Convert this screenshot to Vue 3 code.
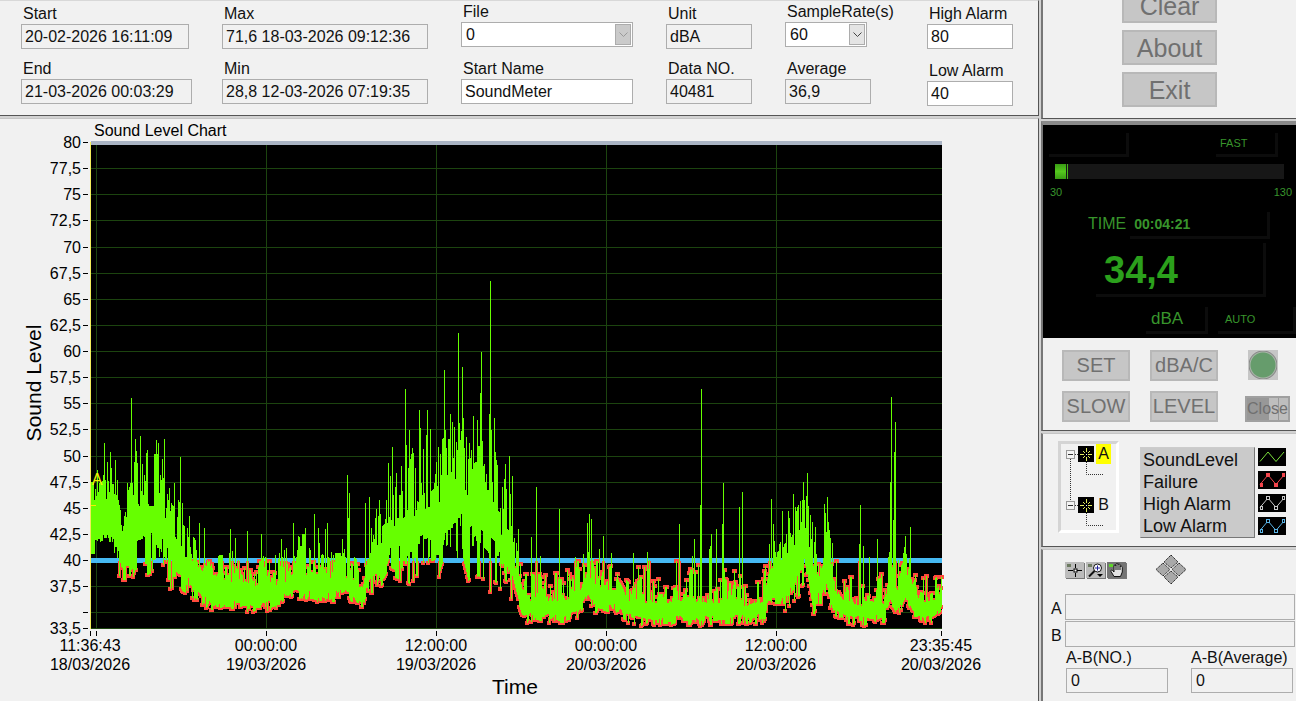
<template>
  <div class="meter-app">
    <main class="left">
      <form class="panel info" @submit.prevent>
        <div v-for="(col, c) in infoColumns" :key="c" class="info-col" :class="col.kind">
          <div v-for="field in col.fields" :key="field.id" class="field">
            <label :for="field.id">{{ field.label }}</label>
            <div v-if="field.type === 'select'" class="select-wrap" :class="{ off: field.off }">
              <select :id="field.id" :disabled="field.off">
                <option>{{ field.value }}</option>
              </select>
              <span class="arrow">
                <svg width="9" height="6" viewBox="0 0 9 6"><path d="M0.5 0.5 4.5 4.5 8.5 0.5" /></svg>
              </span>
            </div>
            <input
              v-else
              :id="field.id"
              type="text"
              :value="field.value"
              :readonly="!field.edit"
              :class="[{ edit: field.edit }, { narrow: field.id === 'start' }]"
            />
          </div>
        </div>
      </form>

      <section class="panel chart">
        <svg class="chart-svg" viewBox="0 0 1038 581" role="img" aria-label="Sound Level Chart">
          <text x="94" y="17" class="t16">Sound Level Chart</text>
          <text transform="translate(41 264) rotate(-90)" text-anchor="middle" class="t21">Sound Level</text>
          <text x="515" y="575" text-anchor="middle" class="t21">Time</text>

          <g v-for="tick in yTicks" :key="tick.value">
            <text v-if="tick.label" x="81" :y="tick.y + 6" text-anchor="end" class="t16">{{ tick.label }}</text>
            <rect x="83" :y="tick.y" width="5" height="1" />
          </g>
          <g v-for="tick in xTicks" :key="tick.x">
            <rect :x="tick.x" y="512" width="1" height="5" />
            <text v-if="tick.time" :x="tick.x" y="532" text-anchor="middle" class="t16">{{ tick.time }}</text>
            <text v-if="tick.time" :x="tick.x" y="551" text-anchor="middle" class="t16">{{ tick.date }}</text>
          </g>

          <rect :x="plot.left" :y="plot.top" :width="plot.width" :height="plot.height" fill="#000" />
          <g fill="#1c440f">
            <rect v-for="tick in yTicks" :key="tick.value" :x="plot.left" :y="tick.y" :width="plot.width" height="1" />
            <rect v-for="x in gridX" :key="x" :x="x" :y="plot.top" width="1" :height="plot.height" />
          </g>
          <rect :x="plot.left" :y="plot.top - 1" :width="plot.width" height="4" fill="#aab4c4" />
          <rect :x="plot.left" :y="toY(40) - 2" :width="plot.width" height="5" fill="#46b9f2" />
          <path :d="failurePath" fill="#ff4a3c" />
          <path :d="levelPath" fill="#66ff00" />
          <rect :x="plot.left - 1" :y="plot.top" width="1" :height="plot.height" fill="#f3ee5a" />
          <text x="97" y="366" text-anchor="middle" class="t16 cursor-name">A</text>
          <path d="M91 386.500h5" stroke="#f4f000" />
        </svg>
      </section>
    </main>

    <aside class="right">
      <section class="panel actions">
        <button type="button" disabled>Clear</button>
        <button type="button" disabled>About</button>
        <button type="button" disabled>Exit</button>
      </section>

      <section class="panel device">
        <div class="lcd">
          <div class="lcd-row lcd-top">
            <span class="cell blank"></span>
            <span class="cell mode">FAST</span>
          </div>
          <div class="bar"><span class="bar-fill"></span><span class="bar-mark"></span></div>
          <div class="scale"><span>30</span><span>130</span></div>
          <div class="lcd-row lcd-time">
            <span>TIME</span>
            <span class="cell clock">00:04:21</span>
          </div>
          <div class="cell reading">34,4</div>
          <div class="lcd-row lcd-units">
            <span class="cell unit">dBA</span>
            <span class="cell auto">AUTO</span>
          </div>
        </div>
        <div class="keys">
          <button type="button" class="key" disabled>SET</button>
          <button type="button" class="key" disabled>dBA/C</button>
          <button type="button" class="led" aria-label="Power" disabled></button>
          <button type="button" class="key" disabled>SLOW</button>
          <button type="button" class="key" disabled>LEVEL</button>
          <button type="button" class="close" disabled>Close</button>
        </div>
      </section>

      <section class="panel series">
        <ul class="tree">
          <li v-for="name in ['A', 'B']" :key="name">
            <svg width="40" height="34" viewBox="0 0 40 34">
              <g fill="none" stroke="#333" stroke-dasharray="1 1">
                <path v-if="name === 'A'" d="M4.500 15V57" />
                <path d="M9 10.500h3M20.500 18v12.500h17" />
              </g>
              <rect x="0.500" y="6.500" width="8" height="8" fill="#f4f4f4" stroke="#999" />
              <path d="M2 10.500h5" stroke="#333" />
              <rect x="12" y="2" width="16" height="16" fill="#000" />
              <path
                d="M14 10.500h4M22 10.500h4M20.500 4v4M20.500 13v4M17 7l2 2M22 9l2-2M17 14l2-2M22 12l2 2"
                stroke="#e4ee60"
              />
              <rect x="20" y="10" width="1" height="1" fill="#fff" />
            </svg>
            <span :class="{ active: name === 'A' }">{{ name }}</span>
          </li>
        </ul>
        <ul class="names">
          <li v-for="item in legend" :key="item.name">{{ item.name }}</li>
        </ul>
        <div class="swatches">
          <svg v-for="item in legend" :key="item.name" width="28" height="18" viewBox="0 0 28 18">
            <rect width="28" height="18" fill="#000" />
            <path d="M2 13.500 10 4 18 13.500 26 4" fill="none" :stroke="item.color" />
            <g v-if="item.mark" :fill="item.mark === 'solid' ? item.color : '#000'" :stroke="item.color">
              <rect x="2.500" y="12.500" width="2" height="3" />
              <rect x="8.500" y="2.500" width="3" height="3" />
              <rect x="16.500" y="12.500" width="3" height="3" />
              <rect x="24.500" y="2.500" width="2" height="3" />
            </g>
          </svg>
        </div>
      </section>

      <section class="panel cursors">
        <div class="tools">
          <button type="button" aria-label="Cursor">
            <svg width="19" height="16" viewBox="0 0 19 16">
              <rect x="2" y="2" width="4" height="3" fill="#6c7a60" />
              <path d="M3 8.500h5M12 8.500h5M10.500 2v4M10.500 11v4" stroke="#000" />
              <rect x="9" y="7" width="3" height="3" fill="#fff" stroke="#000" />
            </svg>
          </button>
          <button type="button" aria-label="Zoom">
            <svg width="19" height="16" viewBox="0 0 19 16">
              <rect x="2" y="2" width="4" height="3" fill="#6c7a60" />
              <circle cx="11.500" cy="6" r="4" fill="#fff" stroke="#111" />
              <path d="M9 6h5M11.500 3.500v5" stroke="#22229a" />
              <path d="M8.500 9 3 14.500" stroke="#111" stroke-width="2" />
              <path d="M11 12h6l-3 3z" fill="#000" />
            </svg>
          </button>
          <button type="button" class="pressed" aria-label="Pan">
            <svg width="19" height="16" viewBox="0 0 19 16">
              <rect x="2" y="2" width="4" height="3" fill="#5fd42c" />
              <path
                d="M7 14.500 4 9.500c-.5-1.500 1-2 2-.5l1 1V4c0-1.500 2-1.500 2 0V2.500c0-1.500 2-1.500 2 0V3c0-1.500 2-1.500 2 .2V5c.5-1.500 2.300-1 2.300.5V10l-1.800 4.500z"
                fill="#e4e4e4"
                stroke="#111"
              />
              <path d="M9 4v4M11 3v5M13 5v3" stroke="#111" />
            </svg>
          </button>
          <svg class="mover" width="32" height="31" viewBox="0 0 32 31">
            <g fill="#a9a9a9" stroke="#222" stroke-dasharray="1.500 0.700">
              <path d="M16 1 23 8 16 14 9 8z" />
              <path d="M8 9 15 15.500 8 22 1 15.500z" />
              <path d="M24 9 31 15.500 24 22 17 15.500z" />
              <path d="M16 17 23 23 16 30 9 23z" />
            </g>
          </svg>
        </div>
        <div class="line">
          <label for="cursor-a">A</label>
          <input id="cursor-a" type="text" readonly />
        </div>
        <div class="line">
          <label for="cursor-b">B</label>
          <input id="cursor-b" type="text" readonly />
        </div>
        <div class="diffs">
          <div class="diff">
            <label for="diff-no">A-B(NO.)</label>
            <input id="diff-no" type="text" value="0" readonly />
          </div>
          <div class="diff">
            <label for="diff-avg">A-B(Average)</label>
            <input id="diff-avg" type="text" value="0" readonly />
          </div>
        </div>
      </section>
    </aside>
  </div>
</template>

<script setup>
const infoColumns = [
  {
    fields: [
      { id: 'start', label: 'Start', value: '20-02-2026 16:11:09' },
      { id: 'end', label: 'End', value: '21-03-2026 00:03:29' },
    ],
  },
  {
    fields: [
      { id: 'max', label: 'Max', value: '71,6 18-03-2026 09:12:36' },
      { id: 'min', label: 'Min', value: '28,8 12-03-2026 07:19:35' },
    ],
  },
  {
    kind: 'raised',
    fields: [
      { id: 'file', label: 'File', value: '0', type: 'select', off: true },
      { id: 'start-name', label: 'Start Name', value: 'SoundMeter', edit: true },
    ],
  },
  {
    fields: [
      { id: 'unit', label: 'Unit', value: 'dBA' },
      { id: 'data-no', label: 'Data NO.', value: '40481' },
    ],
  },
  {
    kind: 'raised',
    fields: [
      { id: 'rate', label: 'SampleRate(s)', value: '60', type: 'select' },
      { id: 'average', label: 'Average', value: '36,9' },
    ],
  },
  {
    kind: 'alarm',
    fields: [
      { id: 'high', label: 'High Alarm', value: '80', edit: true },
      { id: 'low', label: 'Low Alarm', value: '40', edit: true },
    ],
  },
]

const legend = [
  { name: 'SoundLevel', color: '#7be03c' },
  { name: 'Failure', color: '#f2454c', mark: 'solid' },
  { name: 'High Alarm', color: '#c8c8c8', mark: 'open' },
  { name: 'Low Alarm', color: '#5ab4e6', mark: 'open' },
]

const plot = { left: 91, top: 23, width: 851, height: 487 }
const toY = (db) => Math.round(plot.top + (80 - db) * 10.45)

const yTicks = []
for (let v = 80; v >= 35; v -= 2.5) {
  yTicks.push({ value: v, y: toY(v), label: v === 35 ? '' : String(v).replace('.', ',') })
}
yTicks.push({ value: 33.5, y: toY(33.5), label: '33,5' })

const xTicks = [
  { x: 90, time: '11:36:43', date: '18/03/2026' },
  { x: 96 },
  { x: 266, time: '00:00:00', date: '19/03/2026' },
  { x: 436, time: '12:00:00', date: '19/03/2026' },
  { x: 606, time: '00:00:00', date: '20/03/2026' },
  { x: 776, time: '12:00:00', date: '20/03/2026' },
  { x: 941, time: '23:35:45', date: '20/03/2026' },
]
const gridX = [96, 266, 436, 606, 776]

// x, lowest level, spread of lows, base of highs, spread of highs, skew of highs
const envelope = [
  [91, 39, 4, 45.5, 4, 1],
  [98, 39, 4, 45.5, 4, 1],
  [102, 40.6, 2, 45.5, 4.5, 1],
  [116, 40.6, 2, 45.5, 4.5, 1],
  [118, 38, 4, 44, 5, 1],
  [122, 37.8, 4, 42, 5, 1],
  [130, 37.8, 4, 44.5, 6, 1.2],
  [146, 38.4, 4, 45, 5.5, 1],
  [160, 39, 4, 45, 5.5, 1],
  [170, 36.6, 4, 42, 5, 1],
  [180, 36.8, 3, 40.5, 5, 1.3],
  [192, 36.3, 1.5, 39.5, 3.5, 1.3],
  [208, 35.2, 1, 38, 2.4, 1],
  [218, 35, 1.2, 37.6, 3.4, 1],
  [232, 35, 1.2, 37.8, 3.2, 1],
  [255, 35, 1, 37.2, 2.4, 1],
  [264, 35, 1.2, 38.4, 2.4, 1],
  [278, 35, 1.2, 37.2, 3.4, 1],
  [292, 36.4, 1, 38.6, 4, 1.2],
  [310, 36, 1, 38.4, 4, 1.2],
  [330, 35.8, 1, 38, 3, 1],
  [345, 36.4, 1, 38, 3.2, 1],
  [362, 35, 1, 37, 2.6, 1],
  [367, 36.5, 1.5, 40, 3.5, 1.2],
  [384, 37.4, 2, 41, 4, 1],
  [390, 38.2, 3, 43, 5, 1],
  [410, 37.2, 5, 44, 6.5, 1.2],
  [430, 37.6, 5, 45, 6, 1.2],
  [440, 38.2, 4, 45.5, 6, 1],
  [445, 40.2, 4, 47, 5.5, 1],
  [462, 40, 5, 47, 6, 1],
  [468, 37.2, 6, 45.5, 6.5, 1],
  [480, 38.4, 5, 46.5, 6, 1],
  [490, 36.6, 6, 46, 6, 1],
  [500, 36.8, 4.5, 42.5, 5.5, 1],
  [510, 36.2, 3, 41.5, 6, 1],
  [516, 35, 2, 38.5, 4, 1.5],
  [522, 34, 1, 36, 3, 1.3],
  [560, 33.9, 1, 36, 3, 1.8],
  [578, 34.3, 1, 36.6, 3.4, 1.6],
  [588, 36, 1, 38.2, 3.4, 1],
  [595, 34.8, 1, 37.2, 3, 1.3],
  [618, 34.8, 1, 37, 3.2, 1.3],
  [624, 34.1, 1, 36.2, 3.2, 1.6],
  [640, 33.6, 1, 35.8, 4, 2.2],
  [690, 33.7, 1, 36, 4, 2.2],
  [715, 33.6, 1, 35.8, 3, 2.2],
  [735, 33.9, 1, 36.4, 3.6, 1.8],
  [746, 33.6, 1, 35.4, 3, 2.2],
  [763, 33.9, 1, 36, 2.4, 1.8],
  [769, 35, 1.5, 38.5, 3.5, 1],
  [785, 35, 1.5, 39, 4.5, 1],
  [798, 36.2, 3, 42, 4, 1],
  [807, 37, 4, 42.5, 4, 1],
  [812, 34.8, 2, 39, 4, 1],
  [821, 34.8, 2, 38, 3, 1],
  [826, 36.2, 2, 41.5, 4, 1],
  [833, 34.5, 1.5, 37, 3.4, 1.4],
  [842, 34, 1, 36.2, 3.4, 1.6],
  [860, 33.6, 1, 35.6, 3.4, 2.2],
  [884, 33.8, 1, 35.8, 3, 1.8],
  [890, 35.2, 1.5, 38.5, 3, 1],
  [897, 34.2, 1, 36.8, 3, 1],
  [905, 35.8, 1, 39, 3, 1],
  [912, 34.3, 1, 36.4, 2.4, 1.4],
  [925, 33.7, 1, 35.8, 3, 1.8],
  [934, 34, 1, 36.2, 3, 1.5],
  [942, 34.8, 1, 37, 3, 1],
]

// x and level of the tall readings
const peaks = [
  [104, 51.2], [110, 50.3], [131, 55.5], [135, 51.6], [140, 51.9], [147, 50.5], [156, 51.5], [158, 51.2],
  [164, 51.6], [174, 47.4], [180, 49.9], [182, 45.5], [189, 44.2], [199, 43.5], [204, 43.1], [230, 43],
  [235, 42.1], [247, 42.8], [261, 42.5], [281, 42], [293, 43.5], [305, 43.1], [314, 44.4], [318, 43.1],
  [325, 43], [327, 43.5], [342, 42], [347, 48.1], [348, 44], [349, 46.4], [365, 45.5], [369, 46],
  [376, 44.9], [379, 45.7], [388, 49.3], [392, 50.8], [405, 56.4], [406, 51], [409, 52.4], [412, 50.7],
  [419, 54.4], [420, 52.6], [426, 52], [427, 54.4], [430, 52.5], [438, 50.8], [444, 58.2], [450, 54],
  [452, 53.2], [454, 52.7], [458, 61.7], [459, 53.1], [462, 58.5], [463, 53.6], [466, 51.8], [469, 51.2],
  [473, 53.8], [477, 53.4], [480, 56], [481, 59.9], [489, 54], [490, 66.7], [491, 52.4], [494, 53.6],
  [495, 50.3], [505, 49.2], [509, 50], [512, 48], [518, 43], [531, 42.2], [536, 47], [540, 40.4],
  [559, 44.9], [575, 40.3], [583, 40.6], [587, 43.5], [589, 44.4], [591, 43.9], [599, 41.1], [603, 42.3],
  [611, 40.7], [633, 40.7], [647, 40.8], [649, 40], [679, 43.4], [692, 40.4], [694, 42], [700, 45.3],
  [701, 56.4], [709, 41.1], [710, 41.3], [711, 42.5], [716, 43], [722, 43.4], [723, 47.4], [739, 45.1],
  [742, 46.5], [771, 45.8], [773, 43.4], [782, 44.7], [788, 44.7], [789, 44], [793, 46.3], [795, 45.1],
  [797, 45.1], [803, 47.5], [804, 45.7], [807, 48.3], [808, 45.2], [812, 43.6], [815, 43.2], [824, 45.4],
  [825, 44.5], [827, 46], [832, 41.6], [859, 41.5], [860, 45.3], [863, 41.3], [869, 40.3], [877, 42],
  [890, 47.5], [891, 55.6], [893, 43.8], [894, 50.3], [895, 53.2], [903, 40.7], [905, 42.3], [910, 43.2],
]

let seed = 41
const random = () => {
  seed = (seed * 16807) % 2147483647
  return seed / 2147483647
}

const envelopeAt = (x) => {
  const i = Math.max(1, envelope.findIndex((p) => p[0] >= x))
  const a = envelope[i - 1]
  const b = envelope[i]
  const k = (x - a[0]) / (b[0] - a[0])
  return a.map((v, n) => v + (b[n] - v) * k)
}

const peakAt = new Map(peaks)
const columns = []
let lowNoise = 0.5
let highNoise = 0.5
for (let x = plot.left; x < plot.left + plot.width; x++) {
  const [, low, lowSpread, high, highSpread, skew] = envelopeAt(x)
  // neighbouring columns often share one reading
  if (random() < 0.6) lowNoise = random()
  if (random() < 0.75) highNoise = random()
  columns.push({
    x,
    bottom: toY(low + lowSpread * lowNoise),
    top: toY(peakAt.get(x) || high + highSpread * highNoise ** skew),
    outlined: random() < 0.3,
  })
}

const box = (x, y, w, h) => `M${x} ${y}h${w}v${h}h${-w}z`
const levelPath = columns.map((c) => box(c.x, c.top, 1, Math.max(2, c.bottom - c.top))).join('')

// readings under the low alarm get square markers, and some of them an outline
const limit = toY(40)
const failurePath = columns
  .filter((c) => c.bottom > limit)
  .map((c) => {
    const top = Math.max(c.top, limit + 1)
    const line = c.outlined ? box(c.x - 1, top, 3, c.bottom - top) : ''
    const marker = c.top > limit ? box(c.x - 2, c.top - 2, 5, 4) : ''
    return line + marker + box(c.x - 2, c.bottom - 2, 4, 4)
  })
  .join('')
</script>

<style>
body {
  margin: 0;
  background: #f1f1f1;
}
</style>

<style scoped>
.meter-app {
  display: flex;
  gap: 2px;
  min-height: 100vh;
  background: #d2d2d2;
  color: #111;
  font-family: 'Liberation Sans', Arial, sans-serif;
  font-size: 16px;
  line-height: 20px;
}

.left,
.right {
  display: flex;
  flex-direction: column;
  gap: 2px;
}

.left {
  flex: 1;
  min-width: 0;
}

.right {
  flex: 0 0 255px;
}

.panel {
  box-sizing: border-box;
  background: #f1f1f1;
}

.left .panel {
  border-right: 1px solid #555;
}

.right .panel {
  border-left: 2px solid #777;
}

ul {
  margin: 0;
  padding: 0;
  list-style: none;
}

input,
select {
  box-sizing: border-box;
  display: block;
  width: 100%;
  height: 25px;
  margin: 0;
  padding: 0 3px;
  border: 1px solid #adadad;
  border-radius: 0;
  outline: none;
  background: #f1f1f1;
  color: #111;
  font: inherit;
}

input.edit,
select {
  background: #fff;
}

button {
  box-sizing: border-box;
  margin: 0;
  padding: 0;
  border: 2px solid #b8b8b8;
  background: #c6c6c6;
  color: #707070;
  font: inherit;
}

.info {
  display: grid;
  grid-template-columns: 168px 206px 172px 86px 86px 86px;
  column-gap: 33px;
  height: 116px;
  padding-left: 21px;
  border-bottom: 1px solid #555;
  border-top: 1px solid #d8d8d8;
}

.info-col {
  display: flex;
  flex-direction: column;
  gap: 10px;
  padding-top: 3px;
}

.info-col:first-child {
  margin-right: -3px;
}

.info-col.raised {
  gap: 12px;
  padding-top: 1px;
}

.info-col.alarm {
  gap: 12px;
  margin-left: 23px;
  margin-right: -23px;
}

.field label {
  display: block;
  padding-left: 2px;
  white-space: nowrap;
}

.field .narrow {
  width: 168px;
}

.select-wrap {
  position: relative;
}

.info-col:nth-child(5) .select-wrap {
  width: 82px;
}

select {
  appearance: none;
  opacity: 1;
  padding-left: 4px;
}

.arrow {
  position: absolute;
  top: 2px;
  right: 2px;
  display: grid;
  box-sizing: border-box;
  width: 16px;
  height: 21px;
  place-items: center;
  border: 1px solid #acacac;
  background: #e4e4e4;
  pointer-events: none;
}

.arrow path {
  fill: none;
  stroke: #444;
}

.off .arrow {
  background: #cacaca;
}

.off .arrow path {
  stroke: #999;
}

.chart {
  flex: 1;
  border-top: 1px solid #c4c4c4;
}

.chart-svg {
  display: block;
  width: 100%;
}

.t16 {
  font-size: 16px;
}

.t21 {
  font-size: 21px;
}

.cursor-name {
  fill: #f4f000;
}

.actions {
  display: flex;
  flex-direction: column;
  align-items: center;
  justify-content: flex-end;
  gap: 7px;
  height: 119px;
  padding-bottom: 11px;
  overflow: hidden;
  border-bottom: 1px solid #555;
}

.actions button {
  flex: 0 0 35px;
  width: 95px;
  font-size: 25px;
  line-height: 28px;
}

.device {
  height: 310px;
  border-top: 4px solid #8a8a8a;
  border-bottom: 1px solid #555;
}

.lcd {
  display: flex;
  flex-direction: column;
  box-sizing: border-box;
  height: 213px;
  padding-top: 8px;
  background: #000;
  color: #38952c;
  font-size: 11px;
}

.lcd-row {
  display: flex;
}

.cell {
  box-sizing: border-box;
  border-right: 3px solid #0c0c0c;
  border-bottom: 3px solid #0c0c0c;
}

.lcd-top {
  justify-content: space-between;
  height: 24px;
  padding: 0 18px 0 6px;
}

.blank {
  width: 80px;
}

.mode {
  width: 62px;
  padding-left: 4px;
}

.bar {
  display: flex;
  gap: 1px;
  height: 15px;
  margin: 7px 12px 0;
  background: #171717;
}

.bar-fill {
  width: 11px;
  background: linear-gradient(#3a9c14, #55c81e, #3a9c14);
}

.bar-mark {
  width: 1px;
  background: #46b41a;
}

.scale {
  display: flex;
  justify-content: space-between;
  margin-top: 3px;
  padding: 0 4px 0 7px;
}

.lcd-time {
  gap: 4px;
  margin-top: 10px;
  padding-left: 45px;
  font-size: 16px;
  line-height: 24px;
}

.clock {
  width: 140px;
  padding-left: 4px;
  font-size: 14px;
  font-weight: bold;
}

.reading {
  width: 170px;
  height: 54px;
  margin: 4px 0 0 53px;
  padding-left: 8px;
  color: #2ba01c;
  font-size: 38px;
  font-weight: bold;
  line-height: 54px;
}

.lcd-units {
  gap: 10px;
  margin-top: 10px;
  padding-left: 103px;
  line-height: 24px;
}

.unit {
  width: 62px;
  padding-left: 5px;
  font-size: 17px;
}

.auto {
  flex: 1;
  padding-left: 7px;
}

.keys {
  display: grid;
  grid-template-columns: 68px 68px 46px;
  gap: 10px 20px;
  padding: 12px 0 0 19px;
}

.key {
  height: 31px;
  font-size: 20px;
  line-height: 27px;
}

.led {
  width: 30px;
  height: 30px;
  margin-left: 10px;
  border: 1px solid #c6c6c6;
  background: radial-gradient(circle, #669c6c 12px, #a9b5a9 13px, #888 14px, #c6c6c6 15px);
}

.close {
  align-self: end;
  width: 45px;
  height: 26px;
  margin-left: 7px;
  border-color: #a0a0a0;
  background: linear-gradient(90deg, #989898 22px, #bebebe 22px, #bebebe 31px, #999 31px, #999 32px, #bebebe 32px);
  line-height: 18px;
}

.series {
  display: flex;
  align-items: flex-start;
  height: 114px;
  padding: 7px 0 0 15px;
  border-top: 1px solid #c4c4c4;
  border-bottom: 1px solid #555;
}

.tree {
  box-sizing: border-box;
  width: 61px;
  height: 92px;
  padding-left: 5px;
  border: 3px solid #fff;
  border-top-color: #d4d4d4;
  border-left-color: #d4d4d4;
}

.tree li {
  display: flex;
  height: 51px;
}

.tree li:last-child {
  height: 34px;
}

.tree svg {
  flex: none;
  overflow: visible;
}

.tree span {
  width: 15px;
  height: 20px;
  margin-left: -10px;
  text-align: center;
}

.tree .active {
  background: #ff0;
}

.names {
  width: 111px;
  margin: 6px 0 0 21px;
  padding: 1px 0 0 2px;
  border: 1px solid #ccc;
  border-right-color: #777;
  border-bottom-color: #777;
  background: #cacaca;
  font-size: 18px;
  line-height: 22px;
}

.swatches {
  display: flex;
  flex-direction: column;
  gap: 5px;
  margin: 7px 0 0 3px;
}

.cursors {
  flex: 1;
  padding-left: 8px;
  border-top: 1px solid #c4c4c4;
}

.tools {
  display: flex;
  align-items: center;
  gap: 2px;
  padding: 4px 0 9px 14px;
}

.tools button {
  width: 19px;
  height: 16px;
  border: 0;
  background: #bcbcbc;
  box-shadow: 1px 1px 0 #777;
}

.tools .pressed {
  background: #747474;
}

.tools svg {
  display: block;
}

.mover {
  margin-left: 27px;
}

.line {
  display: flex;
  align-items: center;
  margin-bottom: 1px;
}

.line label {
  flex: 0 0 14px;
  padding-top: 3px;
}

.line input {
  height: 26px;
  margin-right: 1px;
}

.diffs {
  display: flex;
  gap: 23px;
  padding-left: 15px;
}

.diff {
  width: 102px;
}

.diff label {
  line-height: 18px;
  white-space: nowrap;
}

.diff input {
  padding-left: 4px;
}
</style>
